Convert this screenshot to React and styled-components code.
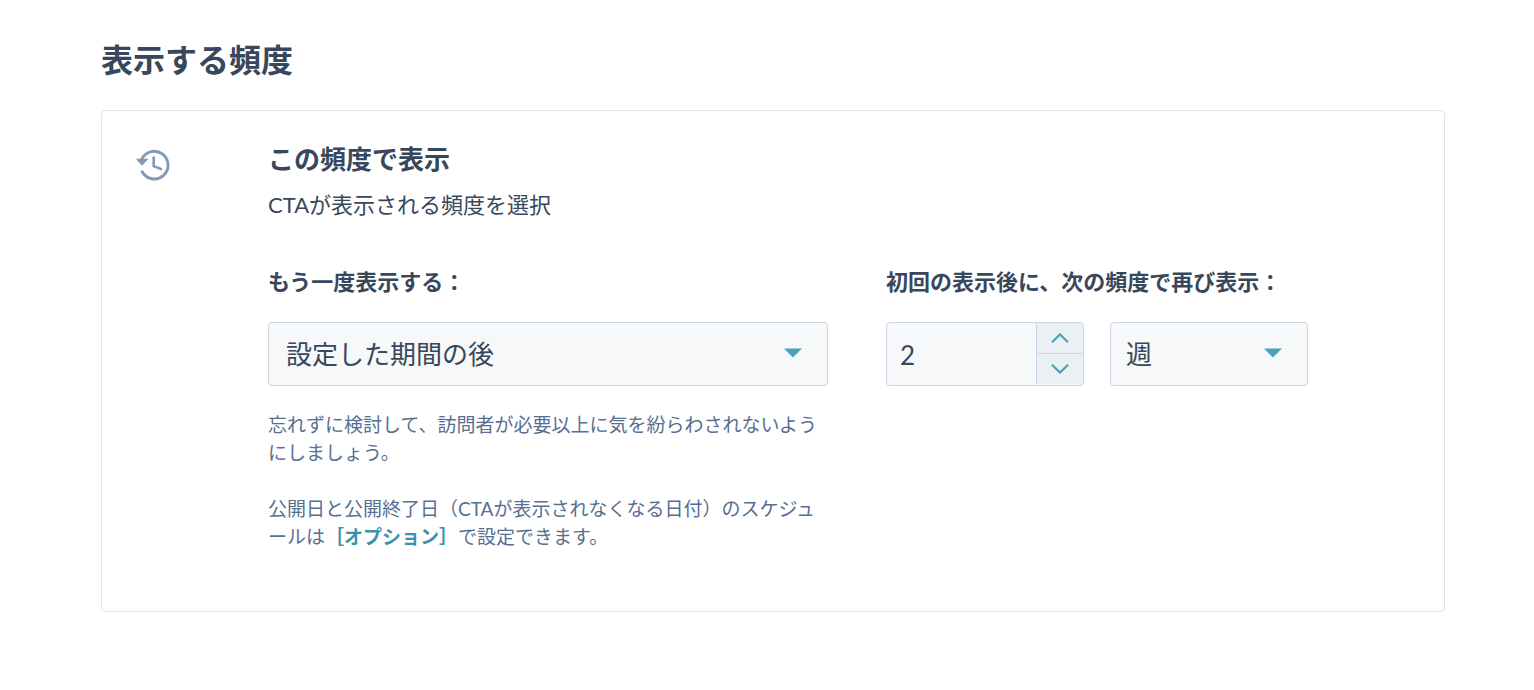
import { useState } from "react";
import styled, { createGlobalStyle, ThemeProvider } from "styled-components";

const theme = {
  colors: {
    text: "#38475b",
    hint: "#566f91",
    icon: "#8299b8",
    accent: "#4aa2ba",
    link: "#3d92aa",
    fieldBg: "#f6f8fa",
    stepperBg: "#ebf0f4",
    fieldBorder: "#cdd6e3",
    cardBorder: "#e0e3ec",
  },
};

const GlobalStyle = createGlobalStyle`
  *, *::before, *::after {
    box-sizing: border-box;
  }
  body {
    margin: 0;
    background: #fff;
    color: ${({ theme }) => theme.colors.text};
    font-family: Lato, "Noto Sans CJK JP", sans-serif;
  }
  h1, h2, p {
    margin: 0;
  }
  button, input, select {
    font-family: inherit;
    color: inherit;
  }
`;

const Page = styled.main`
  padding: 40px 89px 40px 101px;
`;

const PageTitle = styled.h1`
  margin-bottom: 30px;
  font-size: 32px;
  line-height: 40px;
  font-weight: 700;
`;

const Card = styled.section`
  display: flex;
  align-items: flex-start;
  gap: 96px;
  padding: 30px 32px 60px 34px;
  border: 1px solid ${({ theme }) => theme.colors.cardBorder};
  border-radius: 4px;
`;

const IconBox = styled.div`
  flex: none;
  display: flex;
  padding-top: 6px;
`;

const CardBody = styled.div`
  flex: 1;
  min-width: 0;
`;

const CardTitle = styled.h2`
  font-size: 26px;
  line-height: 36px;
  font-weight: 700;
`;

const Description = styled.p`
  margin-top: 12px;
  font-size: 22px;
  line-height: 32px;
`;

const Fields = styled.div`
  display: flex;
  align-items: flex-start;
  gap: 58px;
  margin-top: 45px;
`;

const Field = styled.div`
  flex: 0 1 ${({ $basis }) => $basis};
  min-width: 0;
`;

const Label = styled.label`
  display: block;
  margin-bottom: 24px;
  font-size: 22px;
  line-height: 32px;
  font-weight: 700;
  white-space: nowrap;
`;

const Controls = styled.div`
  display: grid;
  grid-template-columns: 1fr 1fr;
  gap: 26px;
`;

const SelectBox = styled.div`
  position: relative;
  svg {
    position: absolute;
    top: 26px;
    right: 26px;
    fill: ${({ theme }) => theme.colors.accent};
    pointer-events: none;
  }
`;

const Select = styled.select`
  display: block;
  width: 100%;
  height: 64px;
  padding: 0 48px 0 ${({ $inset }) => $inset};
  border: 1px solid ${({ theme }) => theme.colors.fieldBorder};
  border-radius: 4px;
  background: ${({ theme }) => theme.colors.fieldBg};
  font-size: 26px;
  appearance: none;
`;

const NumberBox = styled.div`
  display: flex;
  min-width: 0;
  height: 64px;
  border: 1px solid ${({ theme }) => theme.colors.fieldBorder};
  border-radius: 4px;
  background: ${({ theme }) => theme.colors.fieldBg};
  overflow: hidden;
`;

const NumberInput = styled.input`
  flex: 1;
  min-width: 0;
  padding: 2px 13px 0;
  border: 0;
  background: transparent;
  font-size: 26px;
`;

const Stepper = styled.div`
  display: flex;
  flex-direction: column;
  width: 47px;
  margin-bottom: 1px;
  border-left: 1px solid ${({ theme }) => theme.colors.fieldBorder};
`;

const StepButton = styled.button`
  display: flex;
  flex: 1;
  align-items: center;
  justify-content: center;
  padding: 0;
  border: 0;
  background: ${({ theme }) => theme.colors.stepperBg};
  cursor: pointer;
  & + & {
    border-top: 1px solid ${({ theme }) => theme.colors.fieldBorder};
  }
  svg {
    fill: none;
    stroke: ${({ theme }) => theme.colors.accent};
    stroke-width: 2.2;
  }
`;

const Hint = styled.p`
  margin-top: 25px;
  color: ${({ theme }) => theme.colors.hint};
  font-size: 19px;
  line-height: 28px;
  line-break: loose;
  & + & {
    margin-top: 28px;
  }
`;

const HintLink = styled.a`
  color: ${({ theme }) => theme.colors.link};
  font-weight: 700;
  text-decoration: none;
`;

const HistoryIcon = () => (
  <svg width="36" height="36" viewBox="0 0 36 36" fill="none" stroke={theme.colors.icon}>
    <path d="M5.8 12.2A13.8 13.8 0 1 1 6.2 24.8" strokeWidth="2.9" strokeLinecap="round" />
    <path d="M0.8 12.2H11.6L6 18.2Z" fill={theme.colors.icon} strokeWidth="1" strokeLinejoin="round" />
    <path d="M17.7 10.6V19.2L25 22" strokeWidth="2.6" strokeLinecap="round" />
  </svg>
);

const Caret = () => (
  <svg width="18" height="10" viewBox="0 0 18 10">
    <path d="M0 0.4H18L9 9.6Z" />
  </svg>
);

const App = () => {
  const [count, setCount] = useState("2");

  const step = (amount) =>
    setCount((value) => String(Math.max(1, (Number(value) || 0) + amount)));

  return (
    <ThemeProvider theme={theme}>
      <GlobalStyle />
      <Page lang="ja">
        <PageTitle>表示する頻度</PageTitle>
        <Card>
          <IconBox>
            <HistoryIcon />
          </IconBox>
          <CardBody>
            <CardTitle>この頻度で表示</CardTitle>
            <Description>CTAが表示される頻度を選択</Description>
            <Fields>
              <Field $basis="560px">
                <Label htmlFor="repeat">もう一度表示する：</Label>
                <SelectBox>
                  <Select id="repeat" $inset="17px">
                    <option>設定した期間の後</option>
                  </Select>
                  <Caret />
                </SelectBox>
                <Hint>
                  忘れずに検討して、訪問者が必要以上に気を紛らわされないようにしましょう。
                </Hint>
                <Hint>
                  公開日と公開終了日（CTAが表示されなくなる日付）のスケジュールは
                  <HintLink href="#options">［オプション］</HintLink>
                  で設定できます。
                </Hint>
              </Field>
              <Field $basis="422px">
                <Label htmlFor="count">初回の表示後に、次の頻度で再び表示：</Label>
                <Controls>
                  <NumberBox>
                    <NumberInput
                      id="count"
                      inputMode="numeric"
                      value={count}
                      onChange={(e) => setCount(e.target.value)}
                    />
                    <Stepper>
                      <StepButton type="button" aria-label="増やす" onClick={() => step(1)}>
                        <svg width="18" height="10" viewBox="0 0 18 10">
                          <path d="M1 9.2L9 1.4L17 9.2" />
                        </svg>
                      </StepButton>
                      <StepButton type="button" aria-label="減らす" onClick={() => step(-1)}>
                        <svg width="18" height="10" viewBox="0 0 18 10">
                          <path d="M1 0.8L9 8.6L17 0.8" />
                        </svg>
                      </StepButton>
                    </Stepper>
                  </NumberBox>
                  <SelectBox>
                    <Select aria-label="単位" $inset="15px">
                      <option>週</option>
                    </Select>
                    <Caret />
                  </SelectBox>
                </Controls>
              </Field>
            </Fields>
          </CardBody>
        </Card>
      </Page>
    </ThemeProvider>
  );
};

export default App;
